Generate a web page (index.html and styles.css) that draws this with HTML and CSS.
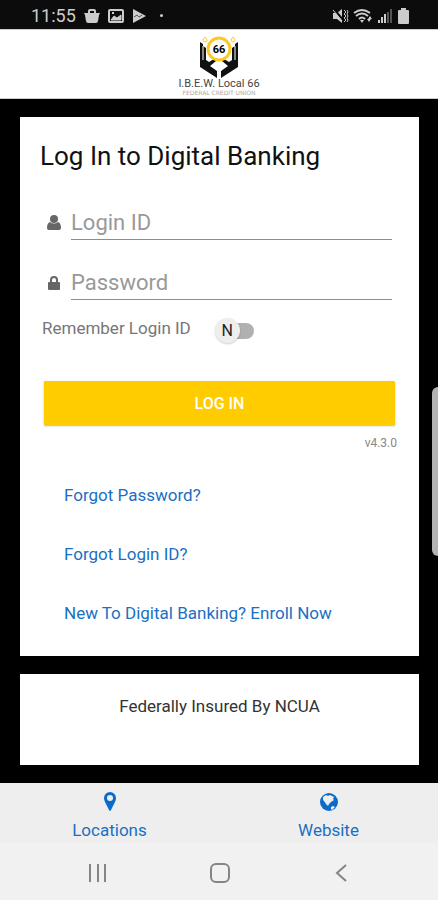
FILE: index.html
```html
<!DOCTYPE html>
<html lang="en">
<head>
  <meta charset="UTF-8">
  <meta name="viewport" content="width=device-width, initial-scale=1">
  <title>Digital Banking</title>
  <link rel="stylesheet" href="styles.css">
</head>
<body>
  <!-- Status bar -->
  <div class="status-bar">
    <div class="status-group">
      <span class="clock">11:55</span>
      <svg width="16" height="16" viewBox="0 0 16 16">
        <path d="M0 5h16l-1 2-1 6q-.4 2-2 2H4q-1.600 0-2-2L1 7z" fill="#ccc"/>
        <path d="M5 5V3q0-1 1-1h4q1 0 1 1v2" fill="none" stroke="#ccc" stroke-width="2"/>
      </svg>
      <svg width="16" height="16" viewBox="0 0 16 16" fill="none" stroke="#ccc" stroke-width="2">
        <rect x="1" y="2" width="14" height="12" rx="1"/>
        <path d="M3 12l3-4 3 2 4-3v5z" fill="#ccc" stroke-width="1"/>
        <path d="M4 5h2" stroke-width="2"/>
      </svg>
      <svg width="14" height="16" viewBox="0 0 14 16">
        <path d="M1 1l13 7-13 7z" fill="#ccc"/>
        <path d="M2 9l3-2 2 2 3-2" fill="none" stroke="#555"/>
      </svg>
      <span class="dot"></span>
    </div>
    <div class="status-group status-right">
      <svg width="17" height="16" viewBox="0 0 17 16" fill="none" stroke="#ccc">
        <path d="M1 5h4l5-4v14l-5-4H1z" fill="#ccc" stroke="none"/>
        <path d="M2 1l9 11" stroke="#0c0c0c" stroke-width="2"/>
        <path d="M1 2l9 11"/>
        <path d="M12 2l2 2-2 2 2 2-2 2 2 2-2 2M15 2l1 2-1 2 1 2-1 2 1 2-1 2"/>
      </svg>
      <svg width="20" height="16" viewBox="0 0 20 16" fill="none" stroke="#ccc" stroke-width="2">
        <path d="M1 5q8-6 16 0M3 8q6-5 12 0M6 11q3-3 6 0"/>
        <path d="M7 12h4l-2 3z" fill="#ccc" stroke="none"/>
        <path d="M14 11l2 3 2-3zM15 11l2-3 2 3z" fill="#ccc" stroke="none"/>
      </svg>
      <svg width="15" height="16" viewBox="0 0 15 16">
        <path d="M1 12h2v3H1zM4 9h2v6H4zM7 6h2v9H7z" fill="#ccc"/>
        <path d="M10 4h2v11h-2zM13 1h2v14h-2z" fill="#555"/>
      </svg>
      <svg width="16" height="16" viewBox="0 0 16 16">
        <path d="M5 0h5v2h2q1 0 1 1v12q0 1-1 1H3q-1 0-1-1V3q0-1 1-1h2z" fill="#ccc"/>
      </svg>
    </div>
  </div>

  <!-- Logo -->
  <header class="header">
    <svg class="logo-mark" width="44" height="42" viewBox="0 0 44 42">
      <g fill="#111">
        <path d="M3 6l3 2v2l3 2v12l3 2 5-3q3 0 2 2l-6 5 7 5v7L3 31z"/>
        <path d="M41 6l-3 2v2l-3 2v12l-3 2-5-3q-3 0-2 2l6 5-7 5v7l17-11z"/>
      </g>
      <path d="M6 10v14M38 10v14" fill="none" stroke="#fff" stroke-width="1"/>
      <circle cx="22" cy="13" r="11" fill="#fff" stroke="#fdc823" stroke-width="3"/>
      <path d="M8 1q4 4 0 5-4-1 0-5zM36 1q4 4 0 5-4-1 0-5z" fill="#fff" stroke="#fdc823"/>
      <text class="logo-number" x="22" y="17" text-anchor="middle">66</text>
    </svg>
    <span class="logo-name">I.B.E.W. Local 66</span>
    <span class="logo-sub">FEDERAL CREDIT UNION</span>
  </header>

  <main class="content">
    <!-- Login -->
    <section class="card login-card">
      <h1>Log In to Digital Banking</h1>
      <form>
        <div class="field">
          <label for="loginId" aria-label="Login ID">
            <svg width="14" height="16" viewBox="0 0 14 16" fill="#666">
              <circle cx="7" cy="4" r="4"/>
              <path d="M3 7q4 3 8 0 3 1 3 6 0 2-2 2H2q-2 0-2-2 0-5 3-6z"/>
            </svg>
          </label>
          <input type="text" id="loginId" placeholder="Login ID">
        </div>
        <div class="field">
          <label for="password" aria-label="Password">
            <svg width="14" height="16" viewBox="0 0 14 16">
              <rect x="1" y="7" width="12" height="8" rx="1" fill="#666"/>
              <path d="M4 8V5q0-3 3-3t3 3v3" fill="none" stroke="#666" stroke-width="2"/>
            </svg>
          </label>
          <input type="password" id="password" placeholder="Password">
        </div>
        <div class="remember">
          <label for="remember">Remember Login ID</label>
          <span class="switch">
            <input type="checkbox" id="remember">
            <span class="knob">N</span>
          </span>
        </div>
        <button type="submit" class="login-button">LOG IN</button>
      </form>
      <p class="version">v4.3.0</p>
      <nav class="links">
        <a href="#">Forgot Password?</a>
        <a href="#">Forgot Login ID?</a>
        <a href="#">New To Digital Banking? Enroll Now</a>
      </nav>
    </section>

    <section class="card insured">Federally Insured By NCUA</section>
    <div class="edge-handle"></div>
  </main>

  <!-- Bottom tabs -->
  <nav class="tabs">
    <a href="#">
      <svg width="20" height="20" viewBox="0 0 20 20">
        <path fill-rule="evenodd" d="M10 0a6 6 0 0 1 6 6q0 2-1 4l-4 8q-1 2-2 0L5 10Q4 8 4 6a6 6 0 0 1 6-6zm0 3a3 3 0 1 0 0 6 3 3 0 0 0 0-6z" fill="#0b6bcb"/>
      </svg>
      Locations
    </a>
    <a href="#">
      <svg width="20" height="20" viewBox="0 0 20 20">
        <circle cx="10" cy="10" r="9" fill="#0b6bcb"/>
        <path d="M4 5l3-2 2 1 2-1 2 1 2 1-1 2 1 1-3 2-2 2-1 2-2-2-2-3-1-1z" fill="#eee"/>
        <path d="M12 15l2-1 2 1-1 1-2 2-1-1z" fill="#eee"/>
      </svg>
      Website
    </a>
  </nav>

  <!-- System navigation -->
  <div class="system-nav">
    <button type="button" aria-label="Recent apps">
      <svg width="20" height="20" viewBox="0 0 20 20" fill="none" stroke="#858585" stroke-width="2">
        <path d="M2 1v18M10 1v18M17 1v18"/>
      </svg>
    </button>
    <button type="button" aria-label="Home">
      <svg width="20" height="20" viewBox="0 0 20 20" fill="none" stroke="#858585" stroke-width="2">
        <rect x="1" y="1" width="18" height="18" rx="5"/>
      </svg>
    </button>
    <button type="button" aria-label="Back">
      <svg width="20" height="20" viewBox="0 0 20 20" fill="none" stroke="#858585" stroke-width="2">
        <path d="M14 2l-9 8 9 8"/>
      </svg>
    </button>
  </div>
</body>
</html>
```
FILE: styles.css
```css
* { box-sizing: border-box; }

body {
  margin: 0;
  min-height: 100vh;
  display: flex;
  flex-direction: column;
  background: #000;
  font-family: Roboto, "Liberation Sans", sans-serif;
  font-size: 17px;
}

svg {
  display: block;
  flex: none;
}

a {
  color: #1a6fc4;
  text-decoration: none;
}

.status-bar {
  display: flex;
  justify-content: space-between;
  align-items: center;
  height: 29px;
  padding: 2px 26px 0 31px;
  background: #0c0c0c;
  color: #ccc;
}

.status-group {
  display: flex;
  align-items: center;
  gap: 8px;
}

.status-right {
  gap: 4px;
}

.clock {
  font-size: 18px;
}

.dot {
  width: 3px;
  height: 3px;
  margin-left: 6px;
  border-radius: 50%;
  background: #ccc;
}

.header {
  display: flex;
  flex-direction: column;
  align-items: center;
  height: 70px;
  padding-top: 6px;
  background: #fff;
  border-top: 1px solid #ccc;
  border-bottom: 1px solid #ccc;
}

.logo-number {
  font-size: 11px;
  font-weight: bold;
}

.logo-name {
  font-size: 11px;
  line-height: 12px;
  color: #444;
}

.logo-sub {
  font-family: "DejaVu Sans", sans-serif;
  font-size: 6px;
  line-height: 6px;
  color: #aaa;
}

.content {
  position: relative;
  flex: 1;
  display: flex;
  flex-direction: column;
  gap: 18px;
  padding: 18px 19px 18px 20px;
}

.card {
  background: #fff;
}

.login-card {
  flex: 1;
  padding: 23px 20px;
}

h1 {
  margin: 0 0 34px;
  font-size: 26px;
  line-height: 32px;
  font-weight: 400;
  color: #111;
}

.field {
  display: flex;
  align-items: center;
  gap: 10px;
  margin: 0 7px 26px;
}

.field input {
  flex: 1;
  min-width: 0;
  height: 34px;
  padding: 0;
  border: none;
  border-bottom: 1px solid #8c8c8c;
  background: none;
  font-family: inherit;
  font-size: 22px;
  color: #333;
  outline: none;
}

.field input::placeholder {
  color: #999;
}

.remember {
  display: flex;
  align-items: flex-end;
  gap: 24px;
  height: 28px;
  margin-top: -10px;
  padding-left: 2px;
  line-height: 20px;
  color: #777;
}

.remember label {
  padding-bottom: 6px;
}

.switch {
  position: relative;
  display: flex;
  align-items: center;
  width: 40px;
  height: 26px;
}

.switch input {
  appearance: none;
  width: 34px;
  height: 16px;
  margin: 0 0 0 5px;
  border-radius: 8px;
  background: #b0b0b0;
}

.knob {
  position: absolute;
  top: 0;
  left: 0;
  width: 25px;
  height: 25px;
  border-radius: 50%;
  background: #eee;
  box-shadow: 0 1px 2px rgba(0,0,0,0.2);
  color: #222;
  font-size: 16px;
  line-height: 25px;
  text-align: center;
  pointer-events: none;
}

.login-button {
  display: block;
  width: calc(100% - 8px);
  height: 44px;
  margin: 37px 4px 0;
  border: none;
  border-radius: 1px;
  background: #fc0;
  box-shadow: 0 1px 2px rgba(0,0,0,0.3);
  color: #fff;
  font-family: inherit;
  font-size: 16px;
  font-weight: 500;
}

.version {
  margin: 10px 2px 32px;
  font-size: 12px;
  line-height: 16px;
  color: #888;
  text-align: right;
}

.links {
  display: flex;
  flex-direction: column;
  align-items: flex-start;
  gap: 35px;
  padding-left: 24px;
  line-height: 24px;
}

.insured {
  height: 91px;
  padding-top: 20px;
  line-height: 24px;
  color: #333;
  text-align: center;
}

.edge-handle {
  position: absolute;
  top: 288px;
  right: 0;
  width: 6px;
  height: 169px;
  border-radius: 6px 0 0 6px;
  background: #b3b3b3;
}

.tabs {
  display: flex;
  height: 60px;
  background: #eee;
}

.tabs a {
  flex: 1;
  display: flex;
  flex-direction: column;
  align-items: center;
  gap: 6px;
  padding-top: 9px;
  line-height: 24px;
}

.system-nav {
  display: flex;
  justify-content: space-between;
  height: 57px;
  padding: 2px 74px 0 76px;
  background: #f1f1f1;
}

.system-nav button {
  width: 44px;
  padding: 0 12px;
  border: none;
  background: none;
}
```
